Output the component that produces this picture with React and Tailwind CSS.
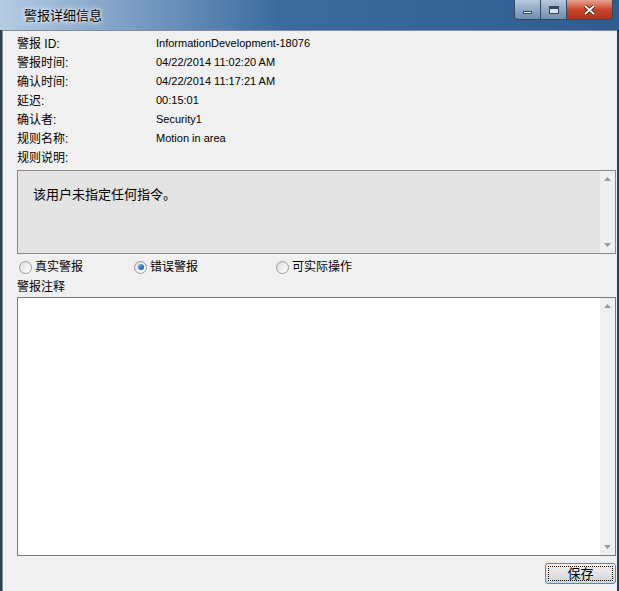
import React, { useState } from "react";

const font = {
  fontFamily: '"Liberation Sans", "Noto Sans CJK SC", sans-serif',
};

const details = [
  { label: "警报 ID:", value: "InformationDevelopment-18076" },
  { label: "警报时间:", value: "04/22/2014 11:02:20 AM" },
  { label: "确认时间:", value: "04/22/2014 11:17:21 AM" },
  { label: "延迟:", value: "00:15:01" },
  { label: "确认者:", value: "Security1" },
  { label: "规则名称:", value: "Motion in area" },
  { label: "规则说明:", value: "" },
];

const ScrollBar = ({ bg }) => (
  <div className={`flex w-[15px] flex-col items-center justify-between py-[6px] ${bg}`}>
    <svg width="7" height="4" viewBox="0 0 7 4">
      <path d="M0 4 L3.5 0 L7 4 Z" fill="#9a9a9a" />
    </svg>
    <svg width="7" height="4" viewBox="0 0 7 4">
      <path d="M0 0 L3.5 4 L7 0 Z" fill="#9a9a9a" />
    </svg>
  </div>
);

const Radio = ({ checked, label, onClick, className }) => (
  <div className={`flex items-center gap-[3px] cursor-pointer ${className}`} onClick={onClick}>
    <div className="flex h-[13px] w-[13px] items-center justify-center rounded-full border border-[#9a9a9a] bg-gradient-to-br from-[#dcdcdc] to-[#ffffff]">
      {checked && (
        <div className="h-[6px] w-[6px] rounded-full bg-gradient-to-br from-[#6fb3f0] to-[#0a4f9c]" />
      )}
    </div>
    <span>{label}</span>
  </div>
);

const App = () => {
  const [kind, setKind] = useState("false");

  return (
    <div style={font} className="flex h-[591px] w-[619px] flex-col overflow-hidden text-[12px] text-black">
      {/* title bar */}
      <div className="flex h-[30px] items-start bg-gradient-to-r from-[#b4cce4] via-[#3c6b9f] via-45% to-[#2f5d91]">
        <div className="pl-[24px] pt-[6px] text-[13px] text-black [text-shadow:0_0_6px_#ffffff,0_0_3px_#ffffff]">
          警报详细信息
        </div>
        <div className="ml-auto mr-[6px] flex h-[20px] overflow-hidden rounded-b-[4px] border border-t-0 border-[#34485e]">
          <div className="flex w-[26px] items-center justify-center border-r border-[#34485e] bg-gradient-to-b from-[#b7c8db] to-[#6f8caf]">
            <div className="mt-[5px] h-[3px] w-[9px] border border-[#3a4656] bg-white" />
          </div>
          <div className="flex w-[26px] items-center justify-center border-r border-[#34485e] bg-gradient-to-b from-[#b7c8db] to-[#6f8caf]">
            <div className="h-[8px] w-[10px] border border-[#3a4656] border-t-[3px] bg-[#dde6f0]" />
          </div>
          <div className="flex w-[45px] items-center justify-center bg-gradient-to-b from-[#e7a18f] via-[#c9452b] to-[#b8301b]">
            <svg width="11" height="10" viewBox="0 0 11 10">
              <path d="M1 1 L10 9 M10 1 L1 9" stroke="#3a1a10" strokeWidth="3.4" />
              <path d="M1 1 L10 9 M10 1 L1 9" stroke="#ffffff" strokeWidth="2" />
            </svg>
          </div>
        </div>
      </div>

      {/* body */}
      <div className="flex flex-1 flex-col border-l-[2px] border-r-[2px] border-[#2b3f55] bg-[#f0f0f0]">
        <div className="flex flex-1 flex-col border-l border-t border-[#8c8c8c] pl-[14px] pr-[1px]">
          <div className="flex flex-col pt-[3px]">
            {details.map((row) => (
              <div key={row.label} className="flex h-[19px] items-center">
                <span className="w-[139px]">{row.label}</span>
                <span className="text-[11px]">{row.value}</span>
              </div>
            ))}
          </div>

          <div className="mt-[3px] flex h-[84px] border border-[#8a8a8a] bg-[#e3e3e3]">
            <div className="flex-1 pl-[15px] pt-[14px] text-[13px]">该用户未指定任何指令。</div>
            <ScrollBar bg="bg-[#efefef]" />
          </div>

          <div className="flex h-[26px] items-center pl-[2px]">
            <Radio className="w-[115px]" checked={kind === "true"} label="真实警报" onClick={() => setKind("true")} />
            <Radio className="w-[142px]" checked={kind === "false"} label="错误警报" onClick={() => setKind("false")} />
            <Radio checked={kind === "op"} label="可实际操作" onClick={() => setKind("op")} />
          </div>

          <div className="h-[17px] leading-[14px]">警报注释</div>

          <div className="flex h-[259px] border border-[#7a7a7a] bg-white">
            <textarea className="flex-1 resize-none bg-white outline-none" />
            <ScrollBar bg="bg-[#f0f0f0]" />
          </div>

          <div className="flex justify-end pt-[7px]">
            <button className="h-[21px] w-[71px] rounded-[3px] border border-[#3c8fd8] bg-gradient-to-b from-[#f2f2f2] to-[#d4d4d4] text-[13px] outline outline-1 outline-dotted outline-offset-[-4px] outline-black">
              保存
            </button>
          </div>
        </div>
      </div>
    </div>
  );
};

export default App;
